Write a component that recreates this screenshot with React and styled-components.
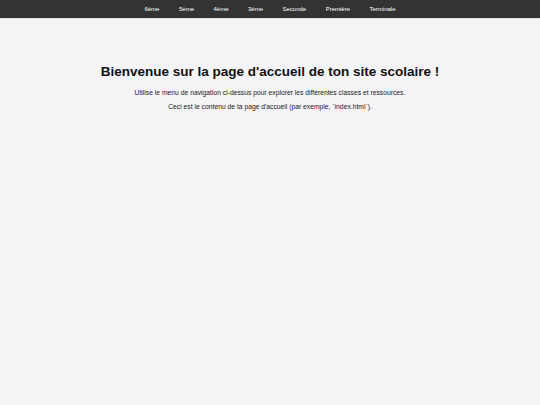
import React from "react";
import styled, { createGlobalStyle } from "styled-components";

const Global = createGlobalStyle`
  html, body { margin: 0; padding: 0; }
  body {
    background: #f4f4f6;
    font-family: "Liberation Sans", Arial, sans-serif;
    color: #111;
  }
`;

const Page = styled.div`
  min-height: 405px;
  background: #f4f4f6;
`;

const Nav = styled.nav`
  background: #333333;
  height: 18px;
  display: flex;
  justify-content: center;
  align-items: center;
  gap: 19.5px;
  border-bottom: 1px solid #e0e0e2;
`;

const NavLink = styled.a`
  color: #ffffff;
  font-size: 6px;
  text-decoration: none;
`;

const Main = styled.main`
  display: flex;
  flex-direction: column;
  align-items: center;
  padding-top: 45px;
`;

const Title = styled.h1`
  margin: 0 0 9px;
  font-size: 13.5px;
  font-weight: bold;
  color: #111;
`;

const Text = styled.p`
  margin: 0 0 5px;
  font-size: 6.75px;
  line-height: 9px;
  color: #222;
`;

const links = ["6ème", "5ème", "4ème", "3ème", "Seconde", "Première", "Terminale"];

export default function App() {
  return (
    <Page>
      <Global />
      <Nav>
        {links.map((l) => (
          <NavLink key={l} href="#">{l}</NavLink>
        ))}
      </Nav>
      <Main>
        <Title>Bienvenue sur la page d'accueil de ton site scolaire !</Title>
        <Text>Utilise le menu de navigation ci-dessus pour explorer les différentes classes et ressources.</Text>
        <Text>Ceci est le contenu de ta page d'accueil (par exemple, `index.html`).</Text>
      </Main>
    </Page>
  );
}
